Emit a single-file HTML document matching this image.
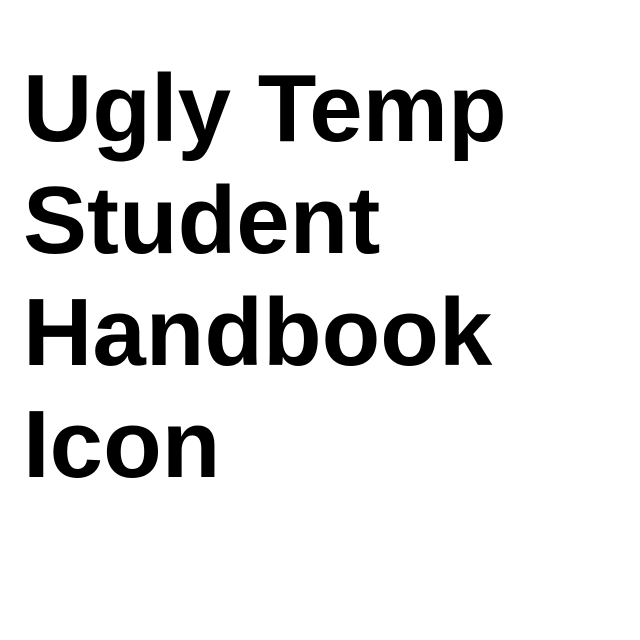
<!DOCTYPE html>
<html><head><style>
html,body{margin:0;padding:0;background:#fff;width:640px;height:640px;overflow:hidden}
div{position:absolute;left:23px;top:53px;font-family:"Liberation Sans",Arial,sans-serif;font-weight:bold;font-size:96px;line-height:112px;color:#000;white-space:nowrap}
</style></head><body>
<div>Ugly Temp<br>Student<br>Handbook<br>Icon</div>
</body></html>
